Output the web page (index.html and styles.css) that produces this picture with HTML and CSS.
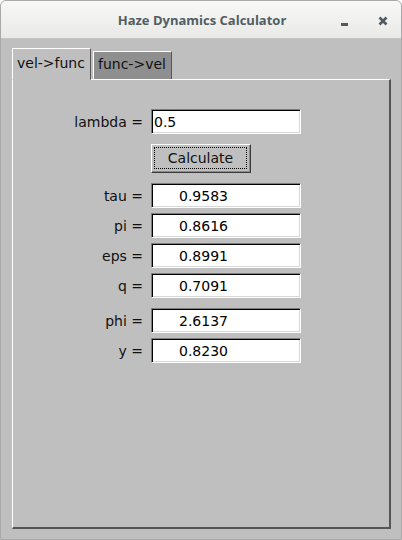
FILE: index.html
```html
<!DOCTYPE html>
<html>
<head>
<meta charset="utf-8">
<link rel="stylesheet" href="styles.css">
</head>
<body>
<div class="window">
  <div class="titlebar">
    <span class="title">Haze Dynamics Calculator</span>
    <span class="btn-min"><svg width="8" height="3" viewBox="0 0 8 3"><rect x="0" y="0" width="7" height="3" fill="#4f5b61"/></svg></span>
    <span class="btn-close"><svg width="10" height="10" viewBox="0 0 10 10"><path d="M1.5 1.5 L8.5 8.5 M8.5 1.5 L1.5 8.5" stroke="#4f5b61" stroke-width="2.6"/></svg></span>
  </div>
  <div class="content">
    <div class="tabs">
      <div class="tab active">vel-&gt;func</div>
      <div class="tab">func-&gt;vel</div>
    </div>
    <div class="panel">
      <div class="row">
        <span class="label">lambda =</span>
        <span class="entry input">0.5</span>
      </div>
      <div class="row sep">
        <span class="label"></span>
        <span class="button"><span class="focus">Calculate</span></span>
      </div>
      <div class="row sep">
        <span class="label">tau =</span>
        <span class="entry value">0.9583</span>
      </div>
      <div class="row">
        <span class="label">pi =</span>
        <span class="entry value">0.8616</span>
      </div>
      <div class="row">
        <span class="label">eps =</span>
        <span class="entry value">0.8991</span>
      </div>
      <div class="row">
        <span class="label">q =</span>
        <span class="entry value">0.7091</span>
      </div>
      <div class="row sep">
        <span class="label">phi =</span>
        <span class="entry value">2.6137</span>
      </div>
      <div class="row">
        <span class="label">y =</span>
        <span class="entry value">0.8230</span>
      </div>
    </div>
  </div>
</div>
</body>
</html>
```

FILE: styles.css
```css
html, body {
  margin: 0;
  padding: 0;
  background: #ffffff;
}
.window {
  width: 402px;
  height: 540px;
  box-sizing: border-box;
  border: 1px solid #a9a9a9;
  border-radius: 6px 6px 0 0;
  background: #bfbfbf;
  overflow: hidden;
  font-family: "DejaVu Sans", sans-serif;
  font-size: 14px;
  color: #111;
}
.titlebar {
  height: 37px;
  background: linear-gradient(#f8f8f7, #e9e9e8);
  border-bottom: 1px solid #c4c4c4;
  position: relative;
  display: flex;
  align-items: center;
  justify-content: center;
}
.title {
  font-family: "Open Sans", sans-serif;
  font-weight: 700;
  font-size: 13px;
  color: #525d63;
  margin-left: 2px;
  margin-top: 1px;
}
.btn-min {
  position: absolute;
  left: 340px;
  top: 20px;
  display: block;
  line-height: 0;
}
.btn-close {
  position: absolute;
  left: 377px;
  top: 15px;
  display: block;
  line-height: 0;
}
.content {
  padding: 10px 0 0 11px;
}
.tabs {
  display: flex;
  align-items: flex-end;
  height: 30px;
  position: relative;
  z-index: 1;
}
.tab {
  box-sizing: border-box;
  width: 79px;
  height: 28px;
  border-top: 1px solid #ffffff;
  border-left: 1px solid #ffffff;
  border-right: 1px solid #555555;
  background: #8f8f8f;
  padding: 4px 0 0 4px;
  color: #111;
  margin-left: 2px;
}
.tab.active {
  height: 32px;
  margin-left: 0;
  margin-bottom: -1px;
  background: #bfbfbf;
  padding-top: 6px;
  border-bottom: 1px solid #bfbfbf;
}
.panel {
  box-sizing: border-box;
  width: 379px;
  height: 450px;
  border-top: 1px solid #ffffff;
  border-left: 1px solid #ffffff;
  border-right: 2px solid #555555;
  border-bottom: 2px solid #555555;
  padding-top: 29px;
  display: flex;
  flex-direction: column;
}
.row {
  display: flex;
  align-items: center;
  margin-top: 5px;
}
.row:first-child {
  margin-top: 0;
}
.row.sep {
  margin-top: 10px;
}
.label {
  width: 130px;
  text-align: right;
  margin-right: 8px;
}
.entry {
  box-sizing: border-box;
  width: 150px;
  height: 25px;
  background: #ffffff;
  border-top: 1px solid #7e7e7e;
  border-left: 1px solid #7e7e7e;
  border-bottom: 1px solid #ffffff;
  border-right: 1px solid #ffffff;
  box-shadow: inset 1px 1px 0 #000000, inset -1px -1px 0 #d8d8d8;
  display: flex;
  align-items: center;
  color: #000;
}
.entry.input {
  padding-left: 2px;
}
.entry.value {
  padding-left: 27px;
}
.button {
  box-sizing: border-box;
  width: 100px;
  height: 29px;
  background: #bfbfbf;
  border-top: 1px solid #ffffff;
  border-left: 1px solid #ffffff;
  border-bottom: 1px solid #3a3a3a;
  border-right: 1px solid #3a3a3a;
  box-shadow: inset -1px -1px 0 #8a8a8a;
  padding: 2px 3px 3px 2px;
  display: flex;
}
.focus {
  flex: 1;
  border: 1px dotted #000;
  display: flex;
  align-items: center;
  justify-content: center;
  color: #111;
}
```
